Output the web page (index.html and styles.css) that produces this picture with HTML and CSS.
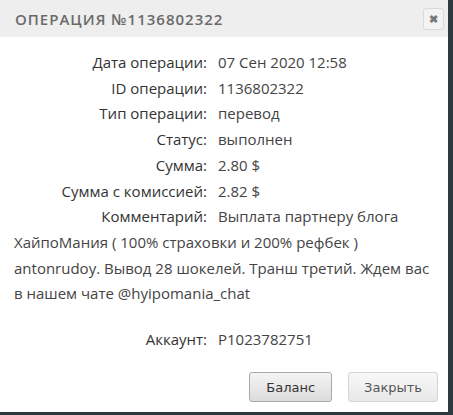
FILE: index.html
```html
<!DOCTYPE html>
<html lang="ru">
<head>
  <meta charset="UTF-8" />
  <title>Операция</title>
  <link rel="stylesheet" href="styles.css">
</head>
<body>
  <div class="dialog">
    <div class="dialog-head">
      <span class="dialog-title">Операция №1136802322</span>
      <button class="close" aria-label="Закрыть">&#10006;</button>
    </div>

    <div class="dialog-body">
      <div class="row"><span class="label">Дата операции:</span><span class="value">07 Сен 2020 12:58</span></div>
      <div class="row"><span class="label">ID операции:</span><span class="value">1136802322</span></div>
      <div class="row"><span class="label">Тип операции:</span><span class="value">перевод</span></div>
      <div class="row"><span class="label">Статус:</span><span class="value">выполнен</span></div>
      <div class="row"><span class="label">Сумма:</span><span class="value">2.80 $</span></div>
      <div class="row"><span class="label">Сумма с комиссией:</span><span class="value">2.82 $</span></div>
      <p class="comment"><span class="label">Комментарий:</span>Выплата партнеру блога ХайпоМания ( 100% страховки и 200% рефбек ) antonrudoy. Вывод 28 шокелей. Транш третий. Ждем вас в нашем чате @hyipomania_chat</p>
      <div class="row account"><span class="label">Аккаунт:</span><span class="value">P1023782751</span></div>
    </div>

    <div class="dialog-foot">
      <button class="btn btn-main">Баланс</button>
      <button class="btn">Закрыть</button>
    </div>
  </div>
</body>
</html>
```

FILE: styles.css
```css
* {box-sizing:border-box;}
body {
  margin:0;
  background:#2c393f;
  font-family:"Open Sans", "DejaVu Sans", sans-serif;
}
.dialog {
  width:448px;
  height:412px;
  background:#fff;
  display:flex;
  flex-direction:column;
}
.dialog-head {
  height:37px;
  background:#eeeeee;
  display:flex;
  align-items:center;
  justify-content:space-between;
  padding:0 4px 0 15px;
}
.dialog-title {
  text-transform:uppercase;
  color:#6a6a6a;
  font-size:15px;
  font-weight:600;
  letter-spacing:1px;
}
.close {
  width:21px;
  height:22px;
  padding:0;
  border:1px solid #dadada;
  border-radius:3px;
  background:#f3f3f3;
  color:#777;
  font-size:11px;
  line-height:20px;
  font-weight:bold;
}
.dialog-body {
  padding:13px 14px 0 14px;
  font-size:15px;
  color:#444;
  flex:1;
}
.row, .comment {
  line-height:25.7px;
}
.comment {margin:0;}
.label {
  display:inline-block;
  width:204px;
  text-align:right;
  color:#333;
  padding-right:11px;
}
.account {margin-top:20px;}
.dialog-foot {
  display:flex;
  justify-content:flex-end;
  gap:16px;
  padding:0 10px 10px 0;
}
.btn {
  height:30px;
  padding:0 15px;
  font-family:"DejaVu Sans", sans-serif;
  font-size:13px;
  color:#555;
  border:1px solid #d4d4d4;
  border-radius:3px;
  background:linear-gradient(#f8f8f8, #e8e8e8);
}
.btn-main {
  padding:0 16px;
  border-color:#a9a9a9;
  background:linear-gradient(#f4f4f4, #dcdcdc);
  color:#333;
}
```
